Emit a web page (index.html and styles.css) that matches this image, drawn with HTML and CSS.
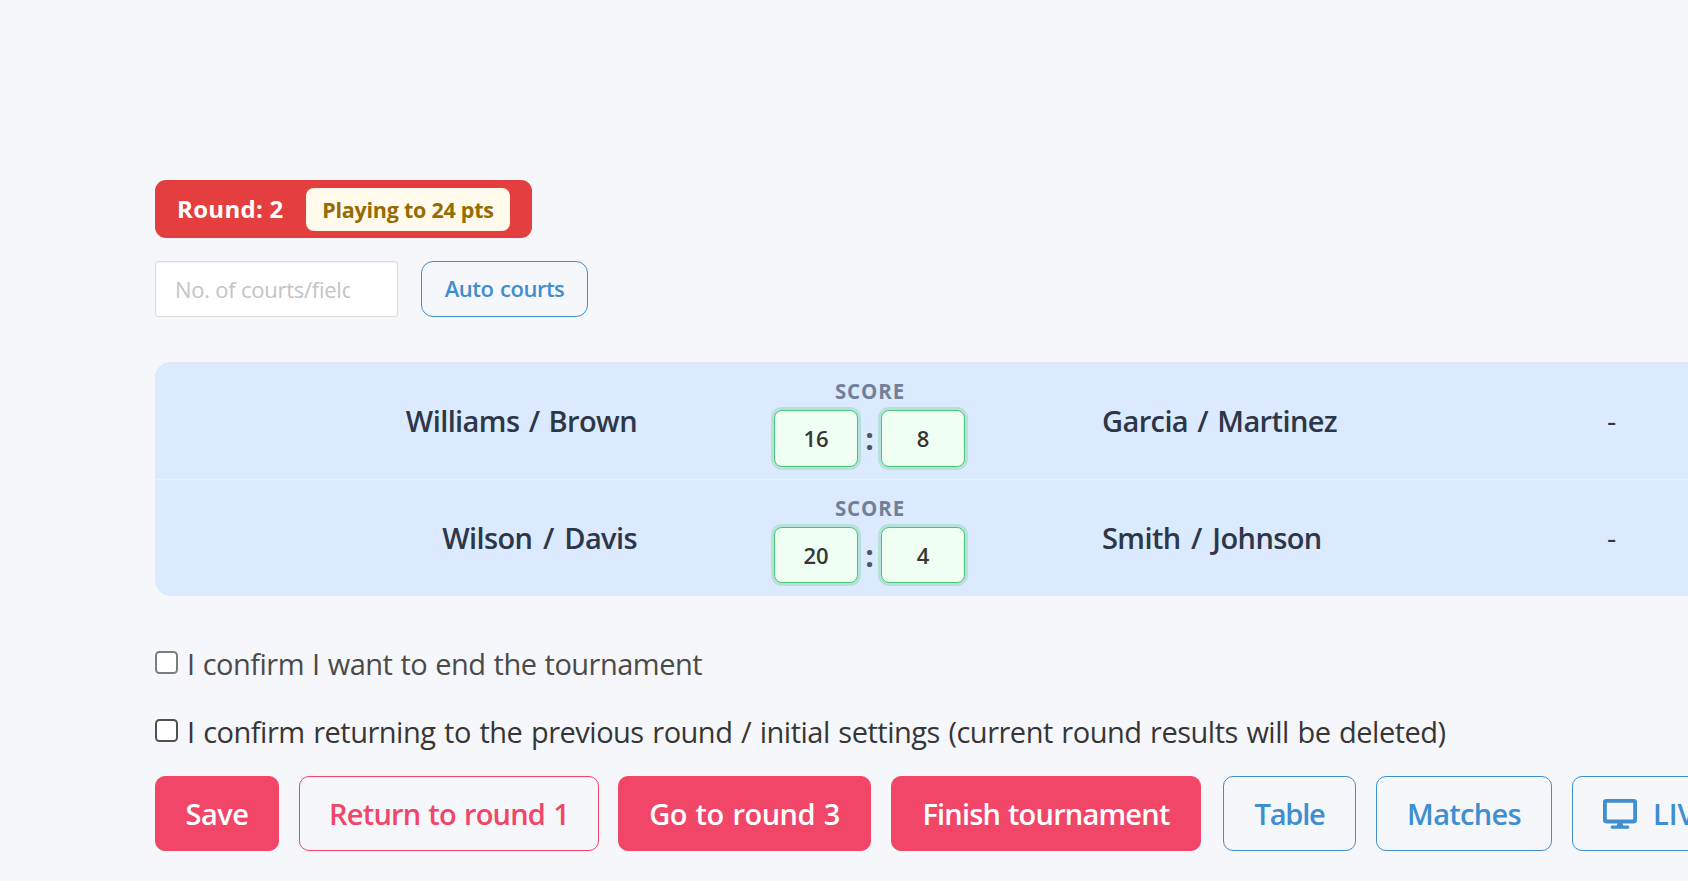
FILE: index.html
```html
<!DOCTYPE html>
<html lang="en">
<head>
<meta charset="utf-8">
<title>Tournament round</title>
<link rel="stylesheet" href="styles.css">
</head>
<body>
<main class="page">
  <div class="round-badge"><span class="round-name">Round: 2</span><span class="points"><span class="points-text">Playing to 24 pts</span></span></div>
  <div class="courts">
    <div class="courts-input"><span class="placeholder">No. of courts/fields</span></div>
    <button class="auto" type="button">Auto courts</button>
  </div>
  <section class="matches">
    <div class="match">
      <div class="team home">Williams / Brown</div>
      <div class="score"><span class="score-label">SCORE</span>
        <div class="score-row"><span class="points-input">16</span><span class="colon">:</span><span class="points-input">8</span></div></div>
      <div class="team away">Garcia / Martinez</div>
      <div class="court">-</div>
    </div>
    <div class="match short-names">
      <div class="team home">Wilson / Davis</div>
      <div class="score"><span class="score-label">SCORE</span>
        <div class="score-row"><span class="points-input">20</span><span class="colon">:</span><span class="points-input">4</span></div></div>
      <div class="team away">Smith / Johnson</div>
      <div class="court">-</div>
    </div>
  </section>
  <label class="confirm muted"><input class="check" type="checkbox"><span>I confirm I want to end the tournament</span></label>
  <label class="confirm"><input class="check" type="checkbox"><span>I confirm returning to the previous round / initial settings (current round results will be deleted)</span></label>
  <div class="actions">
    <button class="btn solid save" type="button">Save</button>
    <button class="btn outline return" type="button">Return to round 1</button>
    <button class="btn solid next" type="button">Go to round 3</button>
    <button class="btn solid finish" type="button">Finish tournament</button>
    <button class="btn link table" type="button">Table</button>
    <button class="btn link list" type="button">Matches</button>
    <button class="btn link live" type="button">
      <svg class="screen" viewBox="0 0 34 30"><rect x="1.9" y="1.9" width="30.2" height="20.6" rx="1.4" fill="none" stroke="currentColor" stroke-width="3.8"/><path d="M14.5 24h5l.8 3.5h-6.6z" fill="currentColor"/><path d="M9.3 28.2h15.4" stroke="currentColor" stroke-width="3.2" stroke-linecap="round"/></svg><span>LIVE</span></button>
  </div>
</main>
</body>
</html>
```
FILE: styles.css
```css
* { box-sizing: border-box; }
body {
  margin: 0;
  overflow: hidden;
  background: #f6f7fb;
  color: #363636;
  font-family: "Open Sans", "Noto Sans", sans-serif;
}
.page { width: 1900px; padding: 180px 0 0 155px; white-space: nowrap; }
.round-badge {
  display: flex; align-items: center;
  width: 377px; height: 58px; padding-left: 22px;
  border-radius: 11px; background: #e53e3e;
  color: #fff; font-size: 24px; font-weight: 700;
}
.round-name { width: 129px; padding-bottom: 2px; letter-spacing: .3px; }
.points {
  display: flex; align-items: center; justify-content: center;
  width: 204px; height: 43px; border-radius: 8px;
  background: #fffaeb; color: #946c00; font-size: 21.5px; letter-spacing: -.25px;
}
.courts { display: flex; gap: 23px; margin-top: 23px; }
.courts-input {
  width: 243px; height: 56px; padding: 0 47px 0 19px; line-height: 54px;
  border: 1px solid #dbdbdb; border-radius: 3px; background: #fff;
  box-shadow: inset 0 1px 2px rgba(10, 10, 10, .05);
}
.placeholder { display: block; overflow: hidden; color: #c4c4c4; font-size: 22px; letter-spacing: -.25px; }
.auto {
  width: 167px; height: 56px; padding: 0 0 2px;
  border: 1px solid #3e8ed0; border-radius: 12px; background: transparent;
  color: #3e8ed0; font: 600 22px "Open Sans", sans-serif; letter-spacing: -.5px; word-spacing: 1.5px;
}
.matches {
  margin-top: 45px; height: 234px; border: 1px solid #e2e8f0; border-radius: 15px;
  background: #dbeafe; overflow: hidden;
}
.match { display: grid; grid-template-columns: 481px 465px 451px 1fr; height: 116px; }
.match + .match { border-top: 1px solid #edf2f7; }
.team {
  padding-top: 38px; color: #2d3748; font-size: 29px; font-weight: 600; line-height: 40px;
  letter-spacing: -.6px; word-spacing: 2.3px;
}
.home { text-align: right; }
.short-names .team { word-spacing: 3.6px; }
.score { padding-left: 137px; width: 329px; text-align: center; }
.score-label { display: block; padding-top: 14px; height: 47px; color: #718096; font-size: 20.5px; font-weight: 700; line-height: 28px; letter-spacing: .9px; }
.score-row { display: flex; }
.points-input {
  flex: none; width: 84px; height: 57px; line-height: 55px;
  border: 1px solid #48c774; border-radius: 8px; background: #f0fff4;
  box-shadow: 0 0 0 3px rgba(72, 199, 116, .25);
  font-size: 22px; font-weight: 600;
}
.match + .match .points-input { height: 56px; }
.colon { width: 23px; flex: none; color: #4a5568; font-size: 30px; font-weight: 700; line-height: 58px; }
.court { padding: 38px 0 0 54px; font-size: 29px; line-height: 40px; font-weight: 500; }
.confirm { display: flex; height: 40px; margin-top: 28px; font-size: 29px; line-height: 38px; letter-spacing: -.5px; word-spacing: 1.57px; }
.confirm.muted { margin-top: 49px; color: #4a4a4a; word-spacing: 1px; }
.check {
  appearance: none; width: 23px; height: 23px; margin: 6px 9px 0 0;
  border: 2px solid #505050; border-radius: 4.5px; background: #fff;
}
.muted .check { border-color: #7d7d7d; }
.actions { display: flex; margin-top: 23px; }
.btn {
  display: flex; align-items: center; justify-content: center; flex: none;
  height: 75px; padding: 0; border: 1px solid transparent; border-radius: 10px;
  background: transparent; font: 600 29px "Open Sans", sans-serif;
}
.solid { background: #f14668; border-color: #f14668; color: #fff; }
.outline { border-color: #f14668; color: #f14668; }
.link { border-color: #3e8ed0; color: #3e8ed0; }
.save { width: 124px; margin-right: 20px; letter-spacing: -.5px; }
.return { width: 300px; margin-right: 19px; letter-spacing: -.8px; word-spacing: 1.3px; }
.next { width: 253px; margin-right: 20px; letter-spacing: -.5px; word-spacing: 1.6px; }
.finish { width: 310px; margin-right: 22px; letter-spacing: -.8px; word-spacing: 1px; }
.table { width: 133px; margin-right: 20px; letter-spacing: -1.2px; }
.list { width: 176px; margin-right: 20px; letter-spacing: -.7px; }
.live { width: 180px; justify-content: flex-start; padding-left: 30px; }
.screen { width: 34px; height: 30px; margin-right: 16px; }
```
